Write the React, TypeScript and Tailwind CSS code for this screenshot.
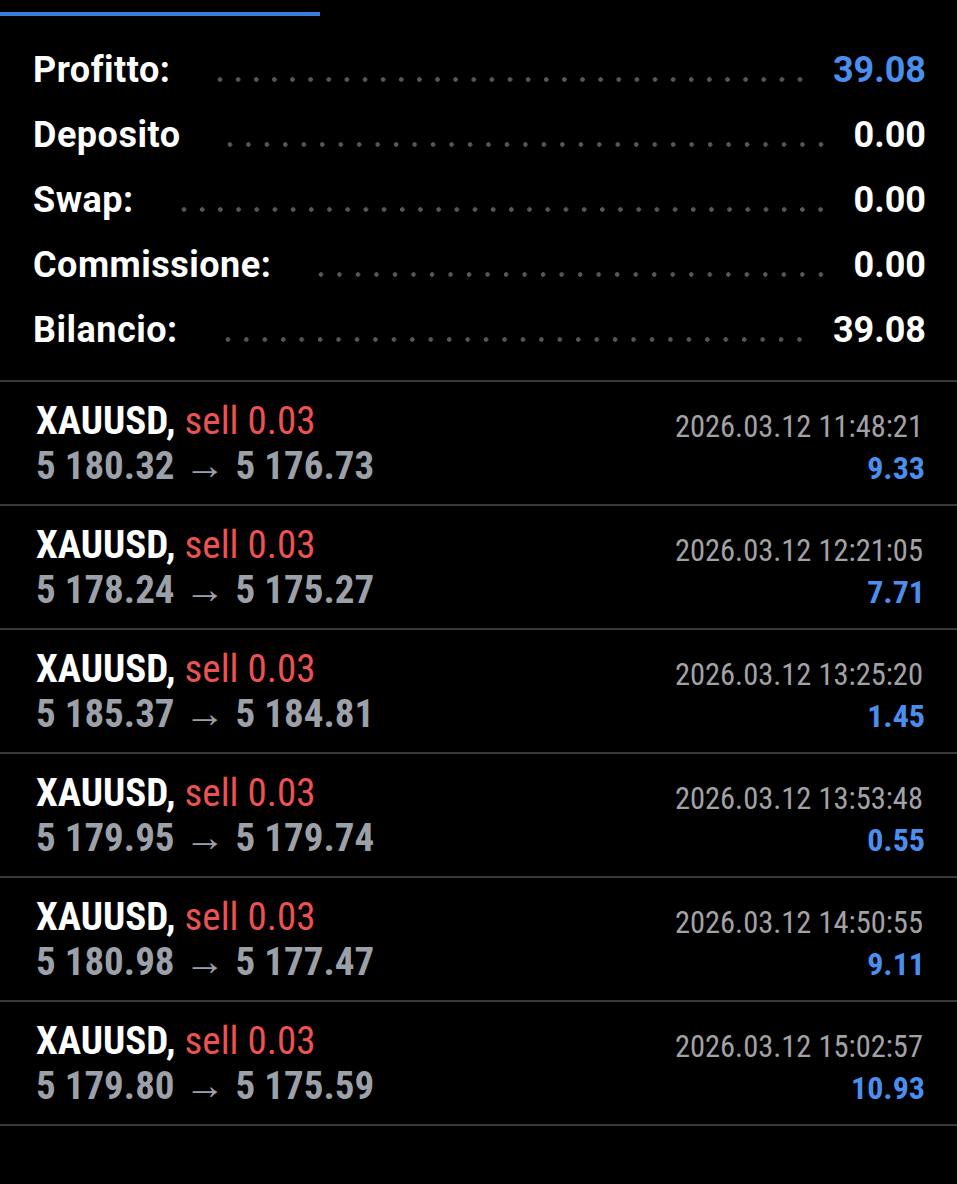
import React from "react";

const summary = [
  { label: "Profitto:", value: "39.08", blue: true },
  { label: "Deposito", value: "0.00" },
  { label: "Swap:", value: "0.00" },
  { label: "Commissione:", value: "0.00" },
  { label: "Bilancio:", value: "39.08" },
];

const trades = [
  { from: "5 180.32", to: "5 176.73", time: "2026.03.12 11:48:21", p: "9.33" },
  { from: "5 178.24", to: "5 175.27", time: "2026.03.12 12:21:05", p: "7.71" },
  { from: "5 185.37", to: "5 184.81", time: "2026.03.12 13:25:20", p: "1.45" },
  { from: "5 179.95", to: "5 179.74", time: "2026.03.12 13:53:48", p: "0.55" },
  { from: "5 180.98", to: "5 177.47", time: "2026.03.12 14:50:55", p: "9.11" },
  { from: "5 179.80", to: "5 175.59", time: "2026.03.12 15:02:57", p: "10.93" },
];

export default function App() {
  return (
    <div
      className="w-[957px] h-[1184px] bg-black overflow-hidden"
      style={{ fontFamily: "Roboto, 'Liberation Sans', sans-serif" }}
    >
      <div className="pt-[12px]">
        <div className="w-[320px] h-[4px] bg-[#3b7ddd]" />
      </div>
      <div className="pt-[22px] pl-[33px] pr-[31px] pb-[17px]">
        {summary.map((s) => (
          <div key={s.label} className="flex items-center h-[65px]">
            <span className="text-[36px] leading-[65px] font-bold tracking-[0.5px] text-white">{s.label}</span>
            <div className="flex-1 h-[5px] mt-[18px] ml-[41px] mr-[24px] bg-repeat-space bg-[radial-gradient(circle,#56565c_2px,transparent_2.5px)] bg-[length:18px_5px]" />
            <span
              className={
                "text-[36px] leading-[65px] font-bold " +
                (s.blue ? "text-[#4a8fee]" : "text-white")
              }
            >
              {s.value}
            </span>
          </div>
        ))}
      </div>
      <div
        className="border-t-2 border-[#38383e]"
        style={{ fontFamily: "'Roboto Condensed', Roboto, 'Liberation Sans', sans-serif" }}
      >
        {trades.map((t) => (
          <div
            key={t.time}
            className="flex justify-between pl-[36px] pr-[34px] pt-[17px] pb-[17px] border-b-2 border-[#38383e]"
          >
            <div className="flex flex-col">
              <div className="h-[44px] text-[39px] leading-[44px] whitespace-nowrap">
                <span className="font-bold text-white">XAUUSD,</span>{" "}
                <span className="text-[#ec5252]">sell 0.03</span>
              </div>
              <div className="h-[44px] text-[39px] leading-[44px] font-bold text-[#9ca1a9] whitespace-nowrap">
                <span>{t.from}</span>
                <span className="inline-block w-[61px] text-center font-normal text-[41px] leading-[44px]">→</span>
                <span>{t.to}</span>
              </div>
            </div>
            <div className="flex flex-col items-end">
              <div className="text-[30.5px] leading-[44px] mt-[6px] text-[#a2a2a6] whitespace-nowrap">{t.time}</div>
              <div className="text-[32px] leading-[38px] font-bold text-[#4a8fee] -mr-[2px]">{t.p}</div>
            </div>
          </div>
        ))}
      </div>
    </div>
  );
}
